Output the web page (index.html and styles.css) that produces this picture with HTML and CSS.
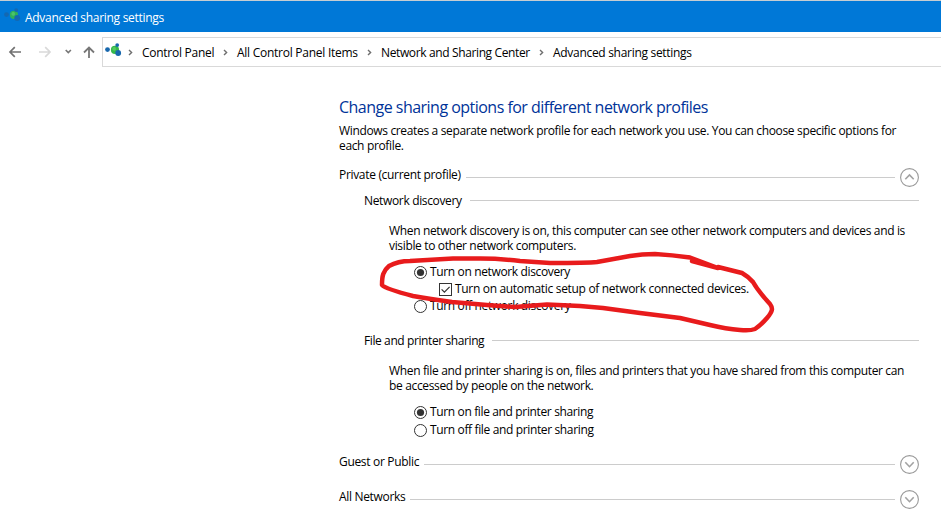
FILE: index.html
```
<!DOCTYPE html>
<html lang="en">
<head>
<meta charset="utf-8">
<title>Advanced sharing settings</title>
<link rel="stylesheet" href="styles.css">
</head>
<body>
<svg class="defs" aria-hidden="true">
  <symbol id="network" viewBox="0 0 17 14">
    <circle cx="10" cy="6.9" r="4.1" fill="#35b84b"/>
    <circle cx="9.2" cy="5.9" r="1.8" fill="#55cb63"/>
    <circle cx="2.5" cy="6.6" r="2.4" fill="#1767ad"/>
    <circle cx="12.2" cy="2.1" r="1.9" fill="#1767ad"/>
    <circle cx="13.2" cy="10" r="2.9" fill="#1767ad"/>
  </symbol>
  <symbol id="sep" viewBox="0 0 5 7"><path d="M1 1l2.6 2.5L1 6" fill="none" stroke="#6e6e6e" stroke-width="1.4"/></symbol>
  <symbol id="down" viewBox="0 0 19 19"><circle cx="9.5" cy="9.5" r="8.9" fill="#fff" stroke="#999" stroke-width="1.1"/><path d="M5.3 7.3l4.2 4.4 4.2-4.4" fill="none" stroke="#a2a2a2" stroke-width="1.6"/></symbol>
  <symbol id="up" viewBox="0 0 19 19"><circle cx="9.5" cy="9.5" r="8.9" fill="#fff" stroke="#999" stroke-width="1.1"/><path d="M5.3 11.3l4.2-4.4 4.2 4.4" fill="none" stroke="#a2a2a2" stroke-width="1.6"/></symbol>
  <symbol id="on" viewBox="0 0 13 13"><circle cx="6.5" cy="6.5" r="6" fill="#fff" stroke="#333"/><circle cx="6.5" cy="6.5" r="3.6" fill="#333"/></symbol>
  <symbol id="off" viewBox="0 0 13 13"><circle cx="6.5" cy="6.5" r="6" fill="#fff" stroke="#333"/></symbol>
  <symbol id="check" viewBox="0 0 13 13"><rect x=".5" y=".5" width="12" height="12" fill="#fff" stroke="#333"/><path d="M2.6 6.4l2.8 2.8 5.2-5.4" fill="none" stroke="#333" stroke-width="1.2"/></symbol>
</svg>

<header class="titlebar">
  <svg class="app-icon"><use href="#network"/></svg>
  <span class="title">Advanced sharing settings</span>
</header>

<nav class="navbar">
  <svg class="arrows" viewBox="0 0 102 35">
    <path d="M21 20H10M14.8 15.2L10 20l4.8 4.8" fill="none" stroke="#727272" stroke-width="1.7"/>
    <path d="M39 20h11M45.2 15.2L50 20l-4.8 4.8" fill="none" stroke="#d9d9d9" stroke-width="1.7"/>
    <path d="M65.7 18l2.6 2.6 2.6-2.6" fill="none" stroke="#777" stroke-width="1.6"/>
    <path d="M89 26V15.5M84 20.5l5-5 5 5" fill="none" stroke="#777" stroke-width="1.8"/>
  </svg>
  <div class="address">
    <svg class="address-icon"><use href="#network"/></svg>
    <svg class="sep"><use href="#sep"/></svg>
    <span class="crumb c1">Control Panel</span>
    <svg class="sep"><use href="#sep"/></svg>
    <span class="crumb c2">All Control Panel Items</span>
    <svg class="sep"><use href="#sep"/></svg>
    <span class="crumb c3">Network and Sharing Center</span>
    <svg class="sep"><use href="#sep"/></svg>
    <span class="crumb c4">Advanced sharing settings</span>
  </div>
</nav>

<main class="content">
  <h1>Change sharing options for different network profiles</h1>
  <p class="intro">Windows creates a separate network profile for each network you use. You can choose specific options for<br>each profile.</p>

  <div class="profile private"><span>Private (current profile)</span><i></i><svg><use href="#up"/></svg></div>

  <section class="group">
    <h2><span>Network discovery</span><i></i></h2>
    <p class="text">When network discovery is on, this computer can see other network computers and devices and is<br>visible to other network computers.</p>
    <div class="options">
      <label><svg><use href="#on"/></svg><span>Turn on network discovery</span></label>
      <label class="nested"><svg><use href="#check"/></svg><span>Turn on automatic setup of network connected devices.</span></label>
      <label><svg><use href="#off"/></svg><span>Turn off network discovery</span></label>
      <svg class="scribble" viewBox="375 245 405 95">
        <path d="M692 261L718 268L690 257.500Q672 255 655 254Q642 254 630 256L597 262Q588 263 550 263L520 261Q500 258.500 480 258.500L453 258.500L410 261Q398 261 389 266C383 271 382 276 382 285Q386 289 413 296Q430 299 452 302L487 305L515 307L547 304.500L580 306L603 308L640 313L680 318L710 325Q726 329 740 330Q750 331 755 329Q761 325 767 318C773 311 773 308 770 304Q758 291 753 282Q749 277 742 273L718 267"/>
      </svg>
    </div>
  </section>

  <section class="group sharing">
    <h2><span class="sharing-title">File and printer sharing</span><i></i></h2>
    <p class="text">When file and printer sharing is on, files and printers that you have shared from this computer can<br>be accessed by people on the network.</p>
    <div class="options roomy">
      <label><svg><use href="#on"/></svg><span>Turn on file and printer sharing</span></label>
      <label><svg><use href="#off"/></svg><span>Turn off file and printer sharing</span></label>
    </div>
  </section>

  <div class="profile guest"><span>Guest or Public</span><i></i><svg><use href="#down"/></svg></div>
  <div class="profile all"><span>All Networks</span><i></i><svg><use href="#down"/></svg></div>
</main>
</body>
</html>
```
FILE: styles.css
```
* { box-sizing: border-box; }
body {
  margin: 0;
  height: 511px;
  overflow: hidden;
  background: #fff;
  color: #000;
  font: 12px/15px "Open Sans", "Noto Sans", sans-serif;
  letter-spacing: -0.345px;
  white-space: nowrap;
}
svg { display: block; flex: none; }
.defs { display: none; }
.titlebar {
  display: flex;
  align-items: center;
  height: 32px;
  border-top: 1px solid #c6cdd2;
  background: #0078d7;
  color: #fff;
}
.title { letter-spacing: -0.29px; padding-top: 1px; }
.app-icon { width: 17px; height: 14px; margin: 0 4px 3px 4px; opacity: .9; }
.navbar { display: flex; height: 35px; }
.arrows { width: 102px; height: 35px; }
.address {
  display: flex;
  align-items: center;
  flex: 1;
  height: 30px;
  margin-top: 5px;
  border: 1px solid #d9d9d9;
  border-right: 0;
}
.address-icon { width: 17px; height: 14px; margin: 0 6px 4px 2px; }
.sep { width: 5px; height: 7px; }
.crumb { padding: 0 0 0 9px; letter-spacing: -0.26px; }
.c1 { width: 90px; }
.c2 { width: 139px; }
.c3 { width: 167px; letter-spacing: -0.37px; }
.c4 { letter-spacing: -0.3px; }

.content { width: 580px; margin: 28px 0 0 339px; }
h1 {
  margin: 0;
  height: 24px;
  color: #003399;
  font-size: 16px;
  line-height: 24px;
  font-weight: 400;
  letter-spacing: -0.52px;
}
p { margin: 0; }
.intro { margin-top: 4px; }
.profile { display: flex; align-items: center; height: 20px; }
.profile span { margin-bottom: 5px; letter-spacing: -0.32px; }
.profile i, h2 i { flex: 1; height: 1px; background: #ccc; }
.profile i { margin: 0 5px; }
.profile svg { width: 19px; height: 19px; }
.private { margin-top: 14px; }
.group { padding-left: 25px; margin-top: 6px; }
h2 {
  display: flex;
  align-items: center;
  height: 16px;
  margin: 0;
  font-size: 12px;
  font-weight: 400;
}
h2 span { margin-bottom: 1px; }
.sharing-title { letter-spacing: -0.4px; }
h2 i { margin: 0 0 1px 8px; }
.text { margin: 14px 0 0 25px; }
.options { position: relative; margin: 11px 0 0 50px; }
.options label { display: flex; align-items: center; height: 17px; }
.options label span { padding-bottom: 2px; letter-spacing: -0.36px; }
.options label svg { width: 13px; height: 13px; margin-right: 3px; }
.options .nested { padding-left: 25px; }
.options .nested span { letter-spacing: -0.32px; }
.options.roomy { margin-top: 10px; }
.options.roomy label { height: 18px; }
.options.roomy span { padding-bottom: 1px; }
.sharing { margin-top: 18px; }
.guest { margin-top: 15px; }
.all { margin-top: 15px; }
.scribble {
  position: absolute;
  left: -39px;
  top: -19px;
  width: 405px;
  height: 95px;
  fill: none;
  stroke: #e81b1c;
  stroke-width: 4.5;
  stroke-linejoin: round;
  stroke-linecap: round;
}
```
